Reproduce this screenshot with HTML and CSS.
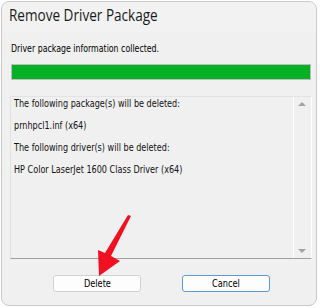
FILE: index.html
```html
<!DOCTYPE html>
<html>
<head>
<meta charset="utf-8">
<link rel="stylesheet" href="styles.css">
</head>
<body>
<div class="window">
  <div class="titlebar"><span class="title-text">Remove Driver Package</span></div>
  <div class="content">
    <div class="status"><span class="narrow">Driver package information collected.</span></div>
    <div class="progress"><div class="fill"></div></div>
    <div class="listbox">
      <div class="items">
        <div class="item"><span class="narrow-item">The following package(s) will be deleted:</span></div>
        <div class="item"><span class="narrow-item">prnhpcl1.inf (x64)</span></div>
        <div class="item"><span class="narrow-item">The following driver(s) will be deleted:</span></div>
        <div class="item"><span class="narrow-item">HP Color LaserJet 1600 Class Driver (x64)</span></div>
      </div>
      <div class="scrollbar">
        <span class="arrow up"></span>
        <span class="arrow down"></span>
      </div>
    </div>
    <div class="buttons">
      <button class="btn"><span class="btn-text">Delete</span></button>
      <button class="btn default"><span class="btn-text">Cancel</span></button>
    </div>
  </div>
  <svg class="pointer" width="320" height="308" viewBox="0 0 320 308">
    <polygon points="127,214 130,215 110,255 119,260 98,275 97,249 104,252" fill="#f01020"/>
  </svg>
</div>
</body>
</html>
```

FILE: styles.css
```css
html, body {
  margin: 0;
  padding: 0;
  background: #ffffff;
}
body {
  width: 320px;
  height: 308px;
  overflow: hidden;
  font-family: "DejaVu Sans", Verdana, sans-serif;
}
.window {
  position: relative;
  box-sizing: border-box;
  margin: 1px 0 0 1px;
  width: 316px;
  height: 305px;
  border: 1px solid #c9c9c9;
  border-radius: 8px;
  background: #f0f0f0;
  overflow: hidden;
}
.titlebar {
  height: 30px;
  padding: 1px 0 0 7px;
  box-sizing: border-box;
  font-family: "Open Sans", "Noto Sans", sans-serif;
  font-size: 15.5px;
  color: #1a1a1a;
  background: #f2f2f2;
  line-height: 24px;
  white-space: nowrap;
}
.title-text {
  display: inline-block;
  transform: scaleX(0.875);
  transform-origin: left center;
}
.content {
  padding: 10px 5px 0 8px;
}
.status {
  font-size: 10px;
  color: #000;
  line-height: 14px;
  padding-left: 1px;
  white-space: nowrap;
}
.narrow {
  display: inline-block;
  transform: scaleX(0.785);
  transform-origin: left center;
}
.progress {
  margin-top: 8px;
  height: 16px;
  box-sizing: border-box;
  border: 1px solid #bcbcbc;
  background: #e6e6e6;
  margin-left: 1px;
  width: 300px;
}
.fill {
  height: 100%;
  background: #06b025;
}
.listbox {
  margin-top: 16px;
  width: 302px;
  height: 163px;
  box-sizing: border-box;
  border: 1px solid #828790;
  border-color: #e3e3e3 #ffffff #a0a0a0 #e3e3e3;
  background: #f0f0f0;
  display: flex;
}
.items {
  flex: 1;
  padding: 0 0 0 3px;
}
.item {
  font-size: 10px;
  line-height: 14px;
  height: 22px;
  color: #111;
  white-space: nowrap;
}
.narrow-item {
  display: inline-block;
  transform: scaleX(0.81);
  transform-origin: left center;
}
.scrollbar {
  width: 17px;
  border-left: 1px solid #ffffff;
  position: relative;
}
.arrow {
  position: absolute;
  left: 4px;
  width: 0;
  height: 0;
  border-left: 4px solid transparent;
  border-right: 4px solid transparent;
}
.arrow.up {
  top: 5px;
  border-bottom: 4px solid #a3a3a3;
}
.arrow.down {
  bottom: 5px;
  border-top: 4px solid #a3a3a3;
}
.buttons {
  display: flex;
  gap: 41px;
  margin-top: 16px;
  padding-left: 43px;
}
.btn {
  width: 88px;
  height: 17px;
  box-sizing: border-box;
  background: #fdfdfd;
  border: 1px solid #d0d0d0;
  border-radius: 3px;
  font-family: "DejaVu Sans", Verdana, sans-serif;
  font-size: 10px;
  color: #000;
  padding: 0;
  line-height: 15px;
}
.btn-text {
  display: inline-block;
  transform: scaleX(0.82);
}
.btn.default {
  border-color: #5b9bd5;
}
.pointer {
  position: absolute;
  left: -1px;
  top: -1px;
}
```
